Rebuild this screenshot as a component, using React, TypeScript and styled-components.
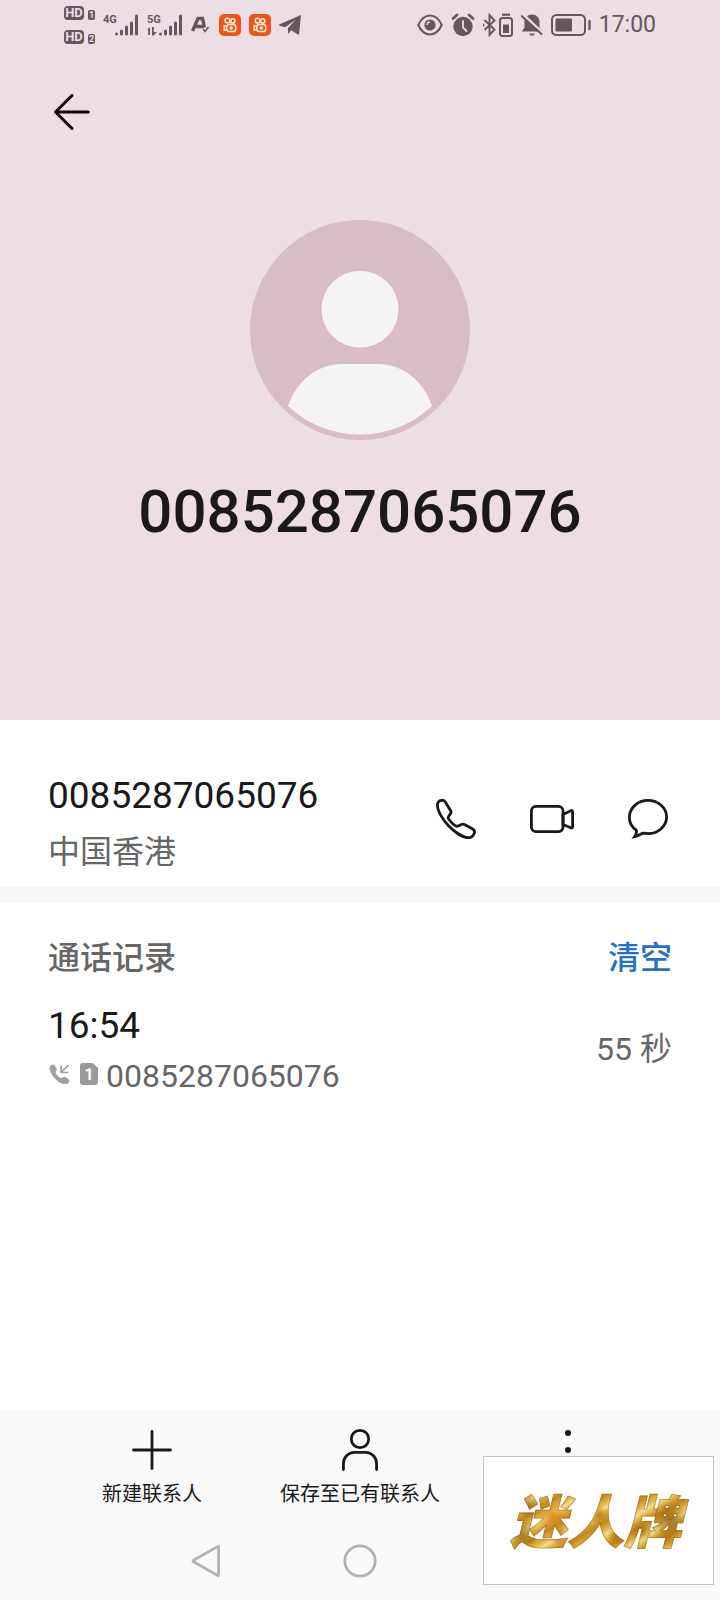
import styled, { createGlobalStyle } from "styled-components";

const GlobalStyle = createGlobalStyle`
  * {
    box-sizing: border-box;
  }
  body {
    margin: 0;
    background-color: #ffffff;
    color: #191919;
    font-family: Roboto, "Noto Sans CJK SC", sans-serif;
  }
  svg {
    display: block;
    flex: none;
  }
`;

const Page = styled.div`
  position: relative;
  min-height: 100vh;
  display: flex;
  flex-direction: column;
`;

const Hero = styled.header`
  background-color: #eddde4;
  padding-bottom: 170px;
`;

const StatusBar = styled.div`
  display: flex;
  justify-content: space-between;
  align-items: center;
  height: 50px;
  padding: 0 64px;
  color: #65575d;
`;

const StatusGroup = styled.div`
  display: flex;
  align-items: center;
  gap: 8px;
`;

const Clock = styled.span`
  font-size: 23px;
  line-height: 26px;
`;

const HdStack = styled.div`
  display: flex;
  flex-direction: column;
  gap: 10px;
`;

const HdRow = styled.div`
  display: flex;
  align-items: flex-end;
  gap: 4px;
`;

const HdTag = styled.span<{ $small?: boolean }>`
  width: ${(props) => (props.$small ? 7 : 20)}px;
  height: ${(props) => (props.$small ? 10 : 14)}px;
  border-radius: ${(props) => (props.$small ? 2 : 4)}px;
  background-color: #65575d;
  color: #eddde4;
  font-size: ${(props) => (props.$small ? 9 : 13)}px;
  line-height: ${(props) => (props.$small ? 10 : 14)}px;
  font-weight: 700;
  text-align: center;
`;

const AppBar = styled.nav`
  display: flex;
  align-items: center;
  height: 124px;
  padding: 0 48px;
`;

const IconButton = styled.button`
  display: flex;
  justify-content: center;
  align-items: center;
  width: 48px;
  height: 48px;
  padding: 0;
  border: 0;
  background: none;
  color: #191919;
  cursor: pointer;
`;

const Profile = styled.div`
  display: flex;
  flex-direction: column;
  align-items: center;
  gap: 34px;
  padding-top: 46px;
`;

const ProfileName = styled.h1`
  margin: 0;
  font-size: 60px;
  line-height: 76px;
  font-weight: 500;
`;

const NumberSection = styled.section`
  display: flex;
  justify-content: space-between;
  align-items: center;
  padding: 52px 48px 14px;
  border-bottom: 16px solid #f6f6f6;
`;

const TextColumn = styled.div<{ $gap: number }>`
  display: flex;
  flex-direction: column;
  gap: ${(props) => props.$gap}px;
`;

const Primary = styled.span`
  font-size: 37px;
  line-height: 48px;
`;

const Secondary = styled.span`
  display: flex;
  align-items: center;
  font-size: 32px;
  line-height: 40px;
  color: #666666;
`;

const Actions = styled.div`
  display: flex;
  gap: 48px;
  padding-bottom: 6px;
`;

const LogSection = styled.section`
  padding: 36px 48px;
`;

const LogHeader = styled.div`
  display: flex;
  justify-content: space-between;
  align-items: center;
  margin-bottom: 24px;
`;

const LogTitle = styled.h2`
  margin: 0;
  font-size: 32px;
  line-height: 40px;
  font-weight: 500;
  color: #666666;
`;

const ClearButton = styled.button`
  padding: 0;
  border: 0;
  background: none;
  color: #256fc9;
  font-family: inherit;
  font-size: 32px;
  line-height: 40px;
  font-weight: 500;
  cursor: pointer;
`;

const LogRow = styled.div`
  display: flex;
  justify-content: space-between;
  align-items: center;
`;

const CallIcons = styled.span`
  display: flex;
  gap: 10px;
  margin-right: 8px;
  padding-bottom: 4px;
`;

const BottomArea = styled.footer`
  margin-top: auto;
  padding: 16px 0 15px;
  background-color: #fafafa;
`;

const Toolbar = styled.div`
  display: grid;
  grid-template-columns: repeat(3, 1fr);
  align-items: start;
  padding: 0 48px;
`;

const ToolButton = styled.button`
  display: flex;
  flex-direction: column;
  align-items: center;
  gap: 8px;
  min-height: 80px;
  padding: 0;
  border: 0;
  background: none;
  color: #191919;
  font-family: inherit;
  font-size: 20px;
  line-height: 24px;
  white-space: nowrap;
  cursor: pointer;
`;

const SystemNav = styled.div`
  display: grid;
  grid-template-columns: repeat(3, 1fr);
  justify-items: center;
  margin-top: 31px;
  padding: 0 18%;
`;

const Stamp = styled.aside`
  position: absolute;
  right: 6px;
  bottom: 15px;
  display: flex;
  justify-content: center;
  align-items: center;
  width: 231px;
  height: 129px;
  padding: 0 6px 6px 0;
  border: 1px solid #c4c4c4;
  background-color: #ffffff;
`;

const StampText = styled.span`
  padding: 0 8px;
  font-family: "Noto Sans CJK SC", sans-serif;
  font-size: 57px;
  line-height: 80px;
  font-weight: 900;
  font-style: italic;
  color: transparent;
  -webkit-text-stroke: 1px rgba(140, 96, 24, 0.45);
  background-image: radial-gradient(circle at 14% 36%, rgba(138, 84, 8, 0.7) 0, transparent 7%),
    radial-gradient(circle at 10% 70%, rgba(138, 84, 8, 0.7) 0, transparent 9%),
    radial-gradient(circle at 27% 48%, rgba(214, 128, 8, 0.8) 0, transparent 10%),
    radial-gradient(circle at 30% 72%, rgba(138, 84, 8, 0.6) 0, transparent 7%),
    radial-gradient(circle at 52% 46%, rgba(184, 112, 10, 0.8) 0, transparent 9%),
    radial-gradient(circle at 62% 72%, rgba(138, 84, 8, 0.6) 0, transparent 8%),
    radial-gradient(circle at 74% 66%, rgba(138, 84, 8, 0.6) 0, transparent 7%),
    radial-gradient(circle at 90% 52%, rgba(138, 84, 8, 0.8) 0, transparent 10%),
    radial-gradient(circle at 88% 74%, rgba(184, 112, 10, 0.7) 0, transparent 8%),
    repeating-linear-gradient(
      148deg,
      #c48a20 0,
      #e0b045 6px,
      #f4dc8c 11px,
      #d9a738 17px,
      #c08522 23px
    );
  -webkit-background-clip: text;
  background-clip: text;
`;

function Signal({ label, data }: { label: string; data?: boolean }) {
  return (
    <svg width="36" height="24" viewBox="0 0 36 24" fill="currentColor">
      <text x="0" y="10" fontSize="11" fontWeight="700">
        {label}
      </text>
      {data && (
        <path d="M0 17l3-3v8H1.200v-5zM5 14h1.800v5H10l-3.500 3.500H5z" />
      )}
      <path
        d="M13.500 21v0M18.500 21v-3M23.500 21v-7M28.500 21v-11M33.500 21v-18"
        stroke="currentColor"
        strokeWidth="3"
        strokeLinecap="round"
      />
    </svg>
  );
}

function OrangeApp() {
  return (
    <svg width="22" height="22" viewBox="0 0 22 22">
      <rect width="22" height="22" rx="5" fill="#e9551d" />
      <g fill="none" stroke="#fff0cf" strokeWidth="1.500">
        <circle cx="8.500" cy="6.600" r="2.400" />
        <circle cx="13.800" cy="6.900" r="2.100" />
        <rect x="7.800" y="10.600" width="9" height="7" rx="2.600" />
        <path d="M7.800 12.600l-2.600-1v4.600l2.600-1" />
        <circle cx="12.200" cy="14.100" r="1" />
      </g>
    </svg>
  );
}

function StatusIcons() {
  return (
    <StatusBar>
      <StatusGroup>
        <HdStack>
          {["1", "2"].map((sim) => (
            <HdRow key={sim}>
              <HdTag>HD</HdTag>
              <HdTag $small>{sim}</HdTag>
            </HdRow>
          ))}
        </HdStack>
        <Signal label="4G" />
        <Signal label="5G" data />
        <svg width="20" height="20" viewBox="0 0 20 20" fill="none" stroke="currentColor">
          <path d="M1.500 16L7 3.500h4.500l2 9M4.500 11.500h8" strokeWidth="3.400" />
          <path d="M12 14l2 2.500 3.500-4.500" strokeWidth="1.500" />
        </svg>
        <OrangeApp />
        <OrangeApp />
        <svg width="22" height="20" viewBox="0 0 22 20" fill="currentColor">
          <path d="M22 0L.6 9.300c-.8.400-.7 1.100.1 1.400l5.300 1.600L16.500 5 9 13v6l3.200-3.800 6.800 4.300c.6.300 1 .1 1.100-.6z" />
        </svg>
      </StatusGroup>
      <StatusGroup>
        <svg width="26" height="22" viewBox="0 0 26 22">
          <path
            d="M1.300 11C4 5 8 1.500 13 1.500S22 5 24.700 11C22 17 18 20.500 13 20.500S4 17 1.300 11z"
            fill="none"
            stroke="currentColor"
            strokeWidth="2"
          />
          <circle cx="13" cy="11" r="5.600" fill="currentColor" />
          <path d="M10 11a3 3 0 0 1 3-3" fill="none" stroke="#eddde4" strokeWidth="1.300" />
        </svg>
        <svg width="24" height="24" viewBox="0 0 24 24">
          <circle cx="12" cy="13.500" r="9.700" fill="currentColor" />
          <path
            d="M2 5.500L6 2M22 5.500L18 2"
            stroke="currentColor"
            strokeWidth="2.800"
            strokeLinecap="round"
          />
          <path d="M12 8v6.500l3.500 3.500" fill="none" stroke="#eddde4" strokeWidth="1.800" strokeLinecap="round" />
        </svg>
        <svg width="30" height="24" viewBox="0 0 30 24" fill="none" stroke="currentColor">
          <path d="M1.500 7l10 9.500L6.500 22V2l5 5.500-10 9.500" strokeWidth="1.900" />
          <path d="M.5 10.500v3" strokeWidth="1.600" />
          <rect x="17" y="5" width="12" height="18" rx="2.500" strokeWidth="2" />
          <path d="M19 1.700h8" strokeWidth="2.200" />
          <rect x="20" y="11.500" width="6" height="8.500" fill="currentColor" stroke="none" />
        </svg>
        <svg width="22" height="24" viewBox="0 0 22 24">
          <path
            d="M11 1.500c-4.500 0-7.500 3.300-7.500 7.500v5.500L1 18.500h20l-2.500-4V9c0-4.200-3-7.500-7.500-7.500zM8 20.500h6l-1.500 2h-3z"
            fill="currentColor"
          />
          <path d="M2 1.500l20 19" stroke="#eddde4" strokeWidth="3" />
          <path d="M0 2.500l21 19" stroke="currentColor" strokeWidth="2.200" />
        </svg>
        <svg width="40" height="22" viewBox="0 0 40 22">
          <rect x="1" y="1" width="33" height="20" rx="4.500" fill="none" stroke="currentColor" strokeWidth="2" />
          <rect x="4.500" y="4.500" width="16.500" height="13" rx="1" fill="currentColor" />
          <path d="M38.500 7v8" stroke="currentColor" strokeWidth="2.400" strokeLinecap="round" />
        </svg>
        <Clock>17:00</Clock>
      </StatusGroup>
    </StatusBar>
  );
}

const phoneNumber = "0085287065076";

function App() {
  return (
    <>
      <GlobalStyle />
      <Page>
        <Hero>
          <StatusIcons />
          <AppBar>
            <IconButton aria-label="返回">
              <svg
                width="36"
                height="36"
                viewBox="0 0 36 36"
                fill="none"
                stroke="#0c0a0b"
                strokeWidth="3"
                strokeLinecap="round"
                strokeLinejoin="round"
              >
                <path d="M18 1.500L1.500 18 18 34.500M1.800 18h32.500" />
              </svg>
            </IconButton>
          </AppBar>
          <Profile>
            <svg width="220" height="220" viewBox="0 0 220 220">
              <circle cx="110" cy="110" r="110" fill="#d8bdc4" />
              <circle cx="110" cy="89.300" r="38.500" fill="#f6f3f4" />
              <path
                d="M38 186C46.500 161 67 144 92 144h36c25 0 45.500 17 54 42a105 105 0 0 1-144 0z"
                fill="#f6f3f4"
              />
            </svg>
            <ProfileName>{phoneNumber}</ProfileName>
          </Profile>
        </Hero>

        <NumberSection>
          <TextColumn $gap={12}>
            <Primary>{phoneNumber}</Primary>
            <Secondary>中国香港</Secondary>
          </TextColumn>
          <Actions>
            <IconButton aria-label="拨打电话">
              <svg
                width="40"
                height="40"
                viewBox="0 0 40 40"
                fill="none"
                stroke="currentColor"
                strokeWidth="2.800"
                strokeLinejoin="round"
              >
                <path d="M1.400 6C1.400 3 3.500 1.300 6.300 1.300c1.400 0 2.400.6 3.200 1.900l5.200 8.500c.6 1 .5 1.900-.2 2.900l-1.800 2.600c-.6.900-.6 2 .1 3 1.700 2.500 3.600 4.500 6 6.200 1.200.9 2.500 1.100 3.900.4l2.700-1.300c1-.5 2-.4 3 .1l7.400 4c2.400 1.300 3.300 2.800 2.400 4.800-1 2.500-3.300 4.300-5.900 4.300-4.500 0-12.500-4.700-19.300-11.500S1.400 11.500 1.400 6z" />
              </svg>
            </IconButton>
            <IconButton aria-label="视频通话">
              <svg
                width="44"
                height="28"
                viewBox="0 0 44 28"
                fill="none"
                stroke="currentColor"
                strokeWidth="2.800"
                strokeLinejoin="round"
              >
                <rect x="1.400" y="1.400" width="31.600" height="25.200" rx="4.500" />
                <path d="M33 9.500l7.800-3.800c1.200-.6 1.800 0 1.800 1.300v14.500c0 1.300-.6 1.900-1.800 1.300L33 19.500z" />
              </svg>
            </IconButton>
            <IconButton aria-label="发送信息">
              <svg
                width="40"
                height="40"
                viewBox="0 0 40 40"
                fill="none"
                stroke="currentColor"
                strokeWidth="2.800"
              >
                <path d="M8.300 31.200C4 28.200 1.400 23.600 1.400 18.500 1.400 9 9.700 1.400 20 1.400S38.600 9 38.600 18 30.300 34.600 20 34.600c-1.800 0-3.300-.2-4.900-.4-3.100 1-5.900 3-8.400 3.500 1.500-2 2-3.700 1.600-6.500z" />
              </svg>
            </IconButton>
          </Actions>
        </NumberSection>

        <LogSection>
          <LogHeader>
            <LogTitle>通话记录</LogTitle>
            <ClearButton>清空</ClearButton>
          </LogHeader>
          <LogRow>
            <TextColumn $gap={6}>
              <Primary>16:54</Primary>
              <Secondary>
                <CallIcons>
                  <svg width="22" height="22" viewBox="0 0 22 22">
                    <path
                      d="M2 3.500C3 1.500 5.500.8 6.700 2.500l1.800 3c.6 1 .3 2-.7 3-.5.6-.4 1.300.1 2 1.200 1.800 2.600 3.200 4.500 4.300.8.500 1.500.4 2.100-.2.900-.9 2-1.100 3-.5l2.800 1.800c1.900 1.300 1.300 3.300-.6 4.500-3.200 2-8.500-.5-12.500-4.700S.5 6.500 2 3.500z"
                      fill="#a0a0a0"
                    />
                    <path d="M20.500 2l-7 7M13 2.500v7h7.500" fill="none" stroke="#a0a0a0" strokeWidth="1.700" />
                  </svg>
                  <svg width="18" height="22" viewBox="0 0 18 22">
                    <path
                      d="M3 0h9.500L18 5v14a3 3 0 0 1-3 3H3a3 3 0 0 1-3-3V3a3 3 0 0 1 3-3z"
                      fill="#9a9a9a"
                    />
                    <text x="9" y="17" fontSize="16" fontWeight="700" textAnchor="middle" fill="#ffffff">
                      1
                    </text>
                  </svg>
                </CallIcons>
                {phoneNumber}
              </Secondary>
            </TextColumn>
            <Secondary>55 秒</Secondary>
          </LogRow>
        </LogSection>

        <BottomArea>
          <Toolbar>
            <ToolButton>
              <svg width="48" height="48" viewBox="0 0 48 48" stroke="currentColor" strokeWidth="2.800" strokeLinecap="round">
                <path d="M5.500 24h37M24 5.500v37" />
              </svg>
              新建联系人
            </ToolButton>
            <ToolButton>
              <svg
                width="48"
                height="48"
                viewBox="0 0 48 48"
                fill="none"
                stroke="currentColor"
                strokeWidth="2.800"
                strokeLinecap="round"
              >
                <circle cx="24" cy="13" r="8.700" />
                <path d="M7.400 43.500V38C7.400 31.500 12 26.400 18.500 26.400h11C36 26.400 40.600 31.500 40.600 38v5.500" />
              </svg>
              保存至已有联系人
            </ToolButton>
            <ToolButton aria-label="更多">
              <svg width="48" height="48" viewBox="0 0 48 48" fill="currentColor">
                <circle cx="24" cy="7" r="3" />
                <circle cx="24" cy="24" r="3" />
                <circle cx="24" cy="41" r="3" />
              </svg>
            </ToolButton>
          </Toolbar>
          <SystemNav>
            <IconButton aria-label="后退">
              <svg
                width="34"
                height="34"
                viewBox="0 0 34 34"
                fill="none"
                stroke="#b3b3b3"
                strokeWidth="2.800"
                strokeLinejoin="round"
              >
                <path d="M28.500 2.600c.7-.4 1.100-.1 1.100.7v27.400c0 .8-.4 1.100-1.100.7L4.600 17.800c-.8-.5-.8-1.100 0-1.600z" />
              </svg>
            </IconButton>
            <IconButton aria-label="主屏幕">
              <svg width="34" height="34" viewBox="0 0 34 34" fill="none" stroke="#b3b3b3" strokeWidth="2.800">
                <circle cx="17" cy="17" r="15.200" />
              </svg>
            </IconButton>
          </SystemNav>
        </BottomArea>

        <Stamp>
          <StampText>迷人牌</StampText>
        </Stamp>
      </Page>
    </>
  );
}

export default App;
